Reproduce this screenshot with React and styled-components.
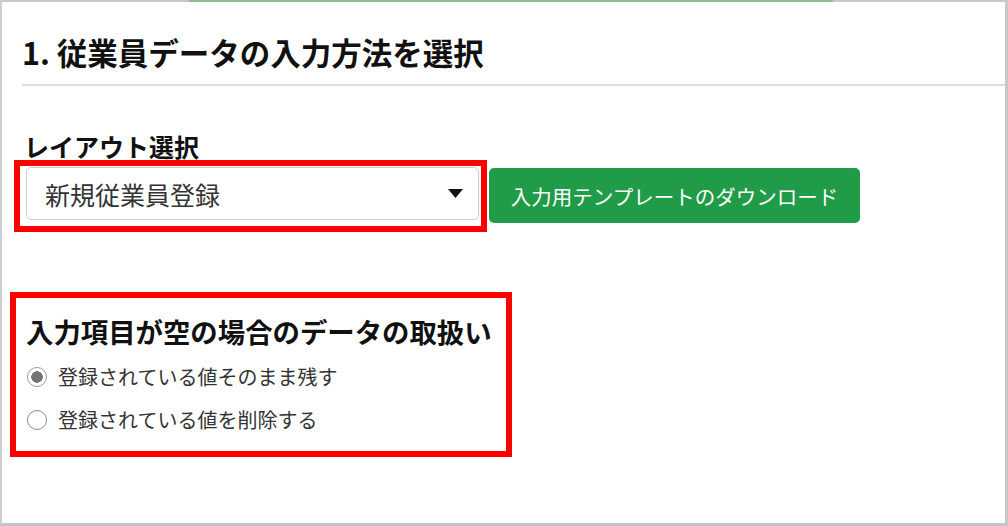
import React from 'react';
import styled, { createGlobalStyle } from 'styled-components';

const GlobalStyle = createGlobalStyle`
  body {
    margin: 0;
    background: #fff;
    font-family: "Noto Sans CJK JP", "Noto Sans", sans-serif;
    color: #111;
  }
`;

const Frame = styled.div`
  box-sizing: border-box;
  width: 1008px;
  height: 526px;
  border-left: 2px solid #cfcfcf;
  border-right: 3px solid #c8c8c8;
  border-bottom: 3px solid #c4c4c4;
  background: #fff;
  overflow: hidden;
`;

const TopBar = styled.div`
  display: flex;
  height: 2px;
  background: #c8c8c8;
`;

const TabMark = styled.div`
  width: 644px;
  margin-left: 187px;
  background: #8dbd9a;
`;

const SectionTitle = styled.h1`
  margin: 28px 0 0 20px;
  padding-bottom: 10px;
  border-bottom: 2px solid #dcdcdc;
  font-size: 30.5px;
  line-height: 44px;
  font-weight: 700;
  color: #111;
`;

const Form = styled.div`
  padding-left: 8px;
`;

const FieldLabel = styled.div`
  margin: 46px 0 0 14px;
  font-size: 25px;
  line-height: 28px;
  font-weight: 700;
  color: #111;
`;

const Row = styled.div`
  display: flex;
  align-items: flex-start;
`;

const Highlight = styled.div`
  box-sizing: border-box;
  width: ${p => p.width}px;
  margin-left: ${p => p.offset || 0}px;
  margin-top: ${p => p.top || 0}px;
  border: 6px solid #ff0000;
  padding: ${p => p.pad};
`;

const SelectBox = styled.div`
  box-sizing: border-box;
  display: flex;
  align-items: center;
  justify-content: space-between;
  height: 53px;
  padding: 0 15px 0 18px;
  border: 1px solid #cfcfcf;
  border-radius: 5px;
  background: #fff;
  font-size: 25px;
  color: #333;
`;

const DownloadButton = styled.button`
  box-sizing: border-box;
  width: 371px;
  height: 55px;
  margin: 8px 0 0 2px;
  border: 0;
  border-radius: 5px;
  background: #209c48;
  color: #fff;
  font-family: inherit;
  font-size: 20.5px;
  cursor: pointer;
`;

const GroupTitle = styled.div`
  margin-bottom: 6px;
  font-size: 27.4px;
  line-height: 36px;
  font-weight: 700;
  color: #111;
`;

const RadioRow = styled.label`
  display: flex;
  align-items: center;
  gap: 11px;
  height: 43px;
  font-size: 20px;
  color: #333;
`;

const Radio = styled.input.attrs({ type: 'radio' })`
  appearance: none;
  box-sizing: border-box;
  width: 20px;
  height: 20px;
  margin: 0 0 0 1px;
  border: 1.5px solid #8a8a8a;
  border-radius: 50%;
  background: #fff;

  &:checked {
    border-color: #9a9a9a;
    background: radial-gradient(circle, #747474 0 5.5px, #fff 6px);
  }
`;

const Caret = () => (
  <svg width="15" height="9" viewBox="0 0 15 9">
    <path d="M0 0 H15 L7.5 9 Z" fill="#111" />
  </svg>
);

export default function App() {
  const [mode, setMode] = React.useState('keep');

  return (
    <Frame>
      <GlobalStyle />
      <TopBar>
        <TabMark />
      </TopBar>

      <SectionTitle>1. 従業員データの入力方法を選択</SectionTitle>

      <Form>
        <FieldLabel>レイアウト選択</FieldLabel>
        <Row>
          <Highlight width={473} offset={4} pad="1px 2px 6px 6px">
            <SelectBox>
              <span>新規従業員登録</span>
              <Caret />
            </SelectBox>
          </Highlight>
          <DownloadButton>入力用テンプレートのダウンロード</DownloadButton>
        </Row>

        <Highlight width={502} top={60} pad="15px 10px 10px 10px">
          <GroupTitle>入力項目が空の場合のデータの取扱い</GroupTitle>
          <RadioRow>
            <Radio name="empty" checked={mode === 'keep'} onChange={() => setMode('keep')} />
            登録されている値そのまま残す
          </RadioRow>
          <RadioRow>
            <Radio name="empty" checked={mode === 'delete'} onChange={() => setMode('delete')} />
            登録されている値を削除する
          </RadioRow>
        </Highlight>
      </Form>
    </Frame>
  );
}
